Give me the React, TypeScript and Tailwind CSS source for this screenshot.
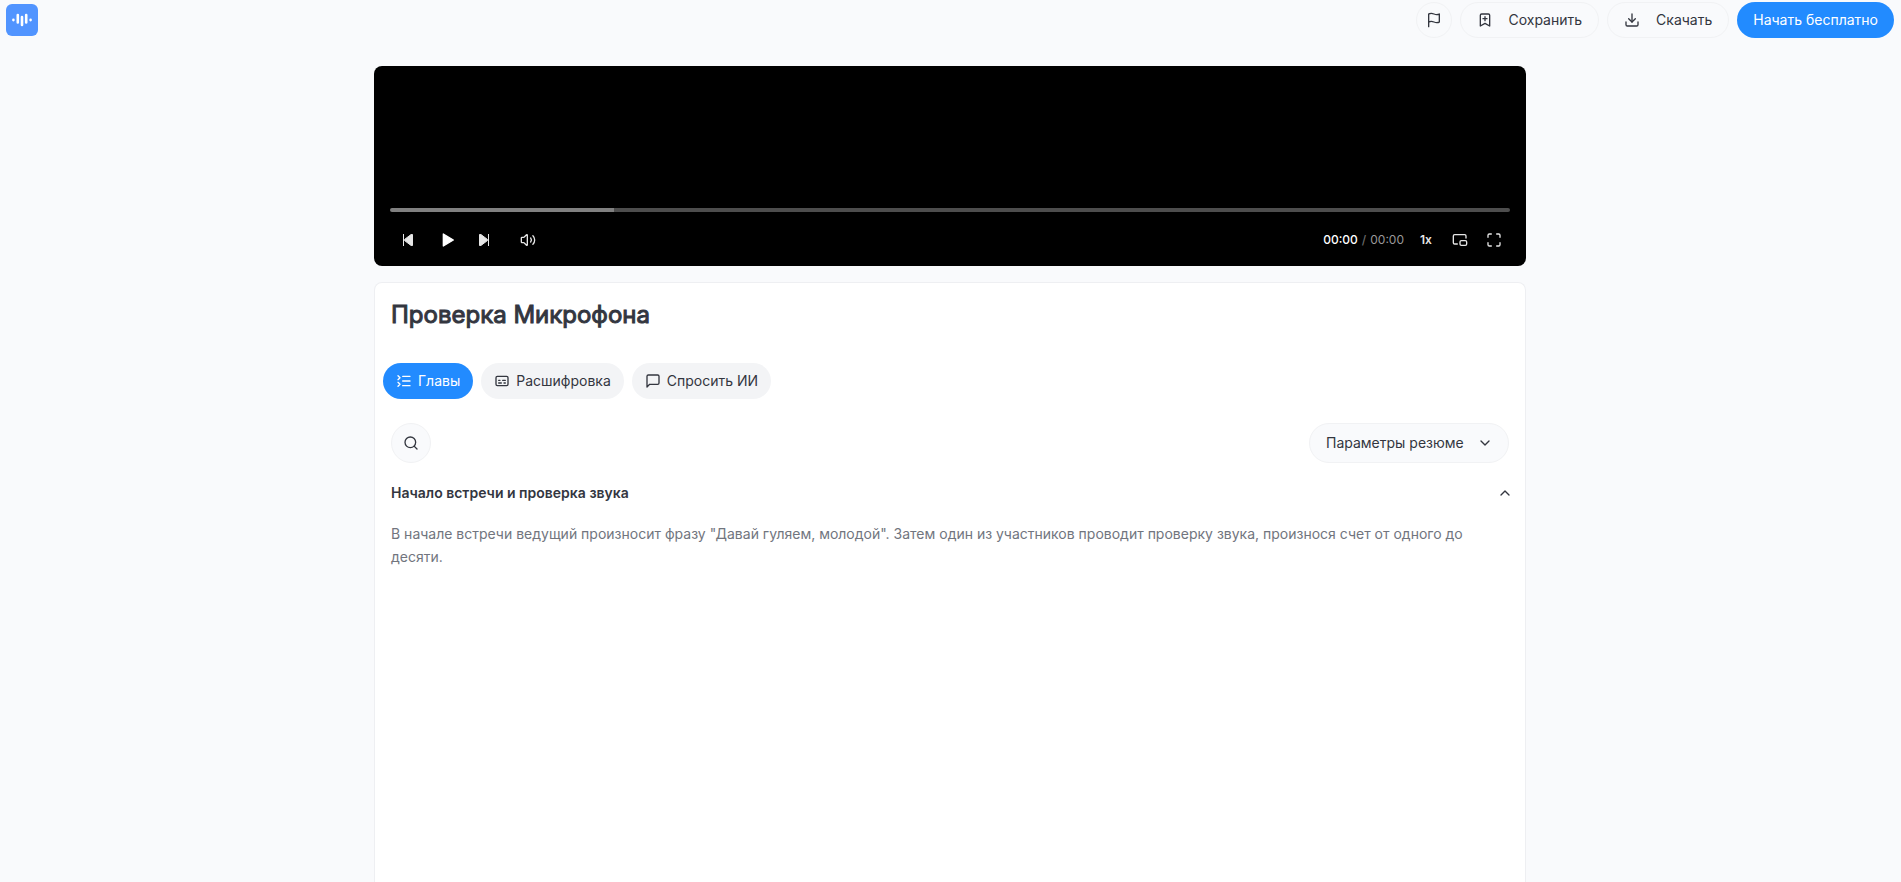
import { useState } from "react";
import {
  BookmarkPlus,
  Captions,
  ChevronDown,
  ChevronUp,
  ListCollapse,
  Maximize,
  PictureInPicture2,
  Search,
  Volume2,
} from "lucide-react";
import { FiDownload, FiFlag, FiMessageSquare } from "react-icons/fi";

const BUFFERED = 20;

const outlineButton =
  "flex h-9 items-center rounded-full border border-[#f1f2f4] text-sm text-[#33363f]";

const tabs = [
  { id: "chapters", label: "Главы", icon: <ListCollapse size={16} /> },
  { id: "transcript", label: "Расшифровка", icon: <Captions size={16} /> },
  { id: "ask", label: "Спросить ИИ", icon: <FiMessageSquare size={16} /> },
];

function Logo() {
  return (
    <svg viewBox="0 0 32 32" className="size-8" aria-hidden="true">
      <rect width="32" height="32" rx="6" fill="#5194ff" />
      <g stroke="#fff" strokeWidth="2.6" strokeLinecap="round">
        <path d="M7.4 15.9v.2M11.8 11v7.4M16 13v8M20.2 11v7.4M24.6 15.9v.2" />
      </g>
    </svg>
  );
}

function SkipIcon({ forward = false }: { forward?: boolean }) {
  return (
    <svg
      viewBox="0 0 16 16"
      className={forward ? "size-4 rotate-180" : "size-4"}
      fill="currentColor"
      stroke="currentColor"
      strokeLinejoin="round"
    >
      <path d="M12.5 2.5v11L11 13.4 4.6 8.6v-1.2L11 2.6z" />
      <path d="M3.5 2v12" />
    </svg>
  );
}

function PlayIcon() {
  return (
    <svg
      viewBox="0 0 24 24"
      className="size-4"
      fill="currentColor"
      stroke="currentColor"
      strokeWidth="2"
      strokeLinejoin="round"
    >
      <path d="M5 3l15 9-15 9z" />
    </svg>
  );
}

function Header() {
  return (
    <header className="flex h-10 items-center justify-between px-1.5">
      <a href="#" aria-label="Главная">
        <Logo />
      </a>
      <div className="flex items-center gap-2">
        <button className={`${outlineButton} w-9 justify-center`} aria-label="Пожаловаться">
          <FiFlag size={16} />
        </button>
        <button className={`${outlineButton} gap-[15px] px-4`}>
          <BookmarkPlus size={16} />
          Сохранить
        </button>
        <button className={`${outlineButton} gap-4 px-4`}>
          <FiDownload size={16} />
          Скачать
        </button>
        <button className="h-9 rounded-full bg-[#228bff] px-4 text-sm text-white">
          Начать бесплатно
        </button>
      </div>
    </header>
  );
}

function Player() {
  const [position, setPosition] = useState(0);

  return (
    <section className="flex h-50 flex-col justify-end rounded-lg bg-black px-4 pb-2 text-[#e6e6e6]">
      <input
        type="range"
        aria-label="Позиция"
        min={0}
        max={100}
        value={position}
        onChange={(e) => setPosition(Number(e.target.value))}
        className="block h-1 w-full appearance-none rounded-full [&::-webkit-slider-thumb]:size-0 [&::-webkit-slider-thumb]:appearance-none"
        style={{ background: `linear-gradient(to right, #808080 ${BUFFERED}%, #4d4d4d ${BUFFERED}%)` }}
      />
      <div className="mt-2.5 flex h-9 items-center justify-between">
        <div className="flex items-center">
          <button className="flex size-9 items-center justify-center" aria-label="Назад">
            <SkipIcon />
          </button>
          <button className="ml-1 flex size-9 items-center justify-center text-white" aria-label="Воспроизвести">
            <PlayIcon />
          </button>
          <button className="flex size-9 items-center justify-center" aria-label="Вперёд">
            <SkipIcon forward />
          </button>
          <button className="ml-2 flex size-9 items-center justify-center" aria-label="Звук">
            <Volume2 size={16} />
          </button>
        </div>
        <div className="flex items-center gap-0.5">
          <div className="mr-1 flex gap-1 text-xs font-medium text-white">
            <span>00:00</span>
            <span className="text-[#6b6b6b]">/</span>
            <span className="font-normal text-[#999999]">00:00</span>
          </div>
          <button className="size-8 text-xs font-semibold">1x</button>
          <button className="flex size-8 items-center justify-center" aria-label="Картинка в картинке">
            <PictureInPicture2 size={16} />
          </button>
          <button className="flex size-8 items-center justify-center" aria-label="На весь экран">
            <Maximize size={16} />
          </button>
        </div>
      </div>
    </section>
  );
}

function Summary() {
  const [active, setActive] = useState("chapters");
  const [open, setOpen] = useState(true);

  return (
    <main className="mt-4 grow rounded-t-lg border border-b-0 border-[#eeeff2] bg-white px-4 pt-4">
      <h1 className="text-2xl font-normal text-[#33363f] [-webkit-text-stroke:1px_#33363f]">
        Проверка Микрофона
      </h1>

      <div className="-ml-2 mt-8 flex gap-2">
        {tabs.map((tab) => (
          <button
            key={tab.id}
            onClick={() => setActive(tab.id)}
            className={`flex h-9 items-center gap-1.5 rounded-full px-[13px] text-sm ${
              active === tab.id ? "bg-[#228bff] text-white" : "bg-[#f3f4f6] text-[#33363f]"
            }`}
          >
            {tab.icon}
            {tab.label}
          </button>
        ))}
      </div>

      <div className="mt-6 flex items-center justify-between">
        <button
          className="flex size-10 items-center justify-center rounded-full border border-[#f1f2f4] bg-[#f9fafc] text-[#33363f]"
          aria-label="Поиск"
        >
          <Search size={16} />
        </button>
        <div className="relative">
          <select
            aria-label="Параметры резюме"
            className="h-10 w-50 appearance-none rounded-full border border-[#f1f2f4] bg-[#f9fafc] px-4 text-sm text-[#33363f]"
          >
            <option>Параметры резюме</option>
          </select>
          <ChevronDown size={16} className="pointer-events-none absolute right-4 top-3 text-[#33363f]" />
        </div>
      </div>

      <button
        onClick={() => setOpen(!open)}
        className="mt-5 flex w-full items-center justify-between text-sm font-semibold text-[#33363f]"
      >
        Начало встречи и проверка звука
        <ChevronUp size={16} className={open ? "-mr-1" : "-mr-1 rotate-180"} />
      </button>
      {open && (
        <p className="mt-[19px] text-sm leading-[23px] text-[#71757e]">
          В начале встречи ведущий произносит фразу "Давай гуляем, молодой". Затем один из участников
          проводит проверку звука, произнося счет от одного до десяти.
        </p>
      )}
    </main>
  );
}

export default function App() {
  return (
    <div className="flex min-h-screen flex-col bg-[#f9fafc] pr-px font-['Inter',sans-serif]">
      <Header />
      <div className="mx-auto mt-[26px] flex w-full max-w-6xl grow flex-col">
        <Player />
        <Summary />
      </div>
    </div>
  );
}
